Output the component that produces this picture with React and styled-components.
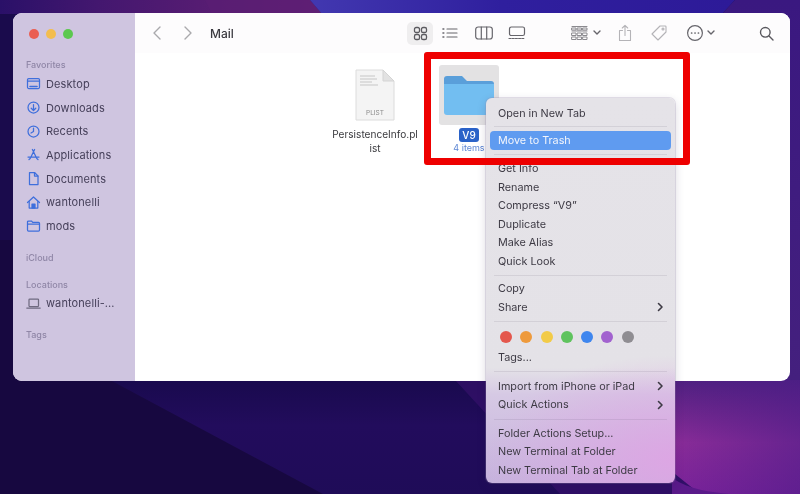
import React from 'react';
import styled, { createGlobalStyle } from 'styled-components';

const Global = createGlobalStyle`
  html, body { margin: 0; padding: 0; background: #170840; }
  body { font-family: Inter, "Liberation Sans", sans-serif; }
`;

const Desktop = styled.div`
  position: relative;
  width: 800px;
  height: 494px;
  overflow: hidden;
  filter: blur(0.4px);
`;

const WallpaperArt = styled.svg`
  position: absolute;
  inset: 0;
`;

const Wallpaper = () => (
  <WallpaperArt width="800" height="494" viewBox="0 0 800 494">
    <defs>
      <linearGradient id="topLeft" x1="0" y1="0" x2="1" y2="0">
        <stop offset="0" stopColor="#2a1068" />
        <stop offset="0.3" stopColor="#43176f" />
        <stop offset="1" stopColor="#6b2276" />
      </linearGradient>
      <linearGradient id="topBlue" x1="0" y1="0" x2="1" y2="0">
        <stop offset="0" stopColor="#4238b0" />
        <stop offset="0.45" stopColor="#2f1f9e" />
        <stop offset="1" stopColor="#2d1a98" />
      </linearGradient>
      <linearGradient id="low" x1="0" y1="0" x2="0" y2="1">
        <stop offset="0" stopColor="#190a4e" />
        <stop offset="0.4" stopColor="#220c5c" />
        <stop offset="1" stopColor="#1f0c58" />
      </linearGradient>
      <linearGradient id="magenta" x1="0" y1="0" x2="0" y2="1">
        <stop offset="0" stopColor="#4f2080" />
        <stop offset="0.55" stopColor="#8a2c98" />
        <stop offset="1" stopColor="#7a229a" />
      </linearGradient>
      <linearGradient id="fadeRight" x1="0" y1="0" x2="1" y2="0">
        <stop offset="0" stopColor="#4a1c88" stopOpacity="0" />
        <stop offset="1" stopColor="#4a1c88" stopOpacity="0.55" />
      </linearGradient>
      <linearGradient id="rightEdge" x1="0" y1="0" x2="0" y2="1">
        <stop offset="0" stopColor="#3a1880" />
        <stop offset="1" stopColor="#44207e" />
      </linearGradient>
    </defs>
    <rect width="800" height="494" fill="#170840" />
    <rect y="0" width="800" height="240" fill="#1a0b4c" />
    <path d="M0 0H310L322 14H0Z" fill="url(#topLeft)" />
    <path d="M205 0H310L322 14H212Z" fill="#5a1e74" opacity="0.7" />
    <path d="M310 0H735L722 14H322Z" fill="url(#topBlue)" />
    <path d="M735 0H800V380H770L722 14Z" fill="url(#rightEdge)" />
    <path d="M110 380H800V494H323Z" fill="url(#low)" />
    <path d="M455 380H800V494H560Z" fill="#3a1270" opacity="0.6" />
    <path d="M670 380H800V494H700L670 470Z" fill="url(#magenta)" />
    <path d="M670 380H800V494H670Z" fill="url(#fadeRight)" />
    <path d="M672 478C690 490 710 492 730 494H672Z" fill="#5a1a8a" />
  </WallpaperArt>
);

const Window = styled.div`
  position: absolute;
  left: 13px;
  top: 13px;
  width: 777px;
  height: 368px;
  display: flex;
  border-radius: 9px;
  overflow: hidden;
  background: #fff;
`;

const Sidebar = styled.aside`
  width: 122px;
  flex: none;
  background: #cfc5e0;
  display: flex;
  flex-direction: column;
  padding: 16px 0 0 13px;
  box-sizing: border-box;
`;

const Lights = styled.div`
  display: flex;
  gap: 7px;
  margin-left: 3px;
  margin-bottom: 20px;
`;

const Light = styled.span`
  width: 10px;
  height: 10px;
  border-radius: 50%;
  background: ${p => p.$color};
`;

const SectionLabel = styled.div`
  font-size: 9px;
  line-height: 12px;
  font-weight: 500;
  color: #8f86a6;
  margin-top: ${p => p.$gap || 0}px;
  margin-bottom: 1px;
`;

const SideItem = styled.div`
  display: flex;
  align-items: center;
  height: ${p => p.$h || 23.7}px;
  font-size: 11px;
  color: #46405a;
  white-space: nowrap;
  letter-spacing: 0.1px;
`;

const SideIcon = styled.svg`
  width: 15px;
  height: 15px;
  flex: none;
  margin-right: 5px;
  fill: none;
  stroke: ${p => p.$gray ? '#6f6a80' : '#3f6fdc'};
  stroke-width: 1.25;
  stroke-linecap: round;
  stroke-linejoin: round;
`;

const Main = styled.main`
  flex: 1;
  display: flex;
  flex-direction: column;
`;

const Toolbar = styled.header`
  height: 40px;
  flex: none;
  display: flex;
  align-items: center;
  background: #fdfcfd;
  position: relative;
`;

const NavGroup = styled.div`
  display: flex;
  gap: 15px;
  margin-left: 15px;
`;

const Title = styled.div`
  font-size: 12px;
  font-weight: 500;
  color: #3b3a40;
  margin-left: 15px;
  width: 197px;
`;

const ToolIcon = styled.svg`
  flex: none;
  display: block;
  width: ${p => p.$w || 18}px;
  height: ${p => p.$h || 18}px;
  margin-left: ${p => p.$ml || 0}px;
  fill: none;
  stroke: ${p => p.$color || '#66656b'};
  stroke-width: ${p => p.$sw || 1.2};
  stroke-linecap: round;
  stroke-linejoin: round;
`;

const ActiveTool = styled.div`
  width: 26px;
  height: 23px;
  border-radius: 5px;
  background: #efeeef;
  display: flex;
  align-items: center;
  justify-content: center;
  flex: none;
`;

const FileArea = styled.section`
  flex: 1;
  display: flex;
  align-items: flex-start;
  padding: 12px 0 0 193px;
`;

const FileItem = styled.div`
  width: 94px;
  display: flex;
  flex-direction: column;
  align-items: center;
`;

const Tile = styled.div`
  width: 60px;
  height: 60px;
  border-radius: 3px;
  background: ${p => p.$selected ? '#e3e2e3' : 'transparent'};
  display: flex;
  align-items: center;
  justify-content: center;
`;

const FileName = styled.div`
  margin-top: 2px;
  font-size: 10.1px;
  line-height: 14px;
  color: #3a3a3e;
  text-align: center;
`;

const Badge = styled.div`
  margin-top: 3px;
  padding: 0 3px;
  height: 14px;
  line-height: 14px;
  border-radius: 3px;
  background: #2a62c8;
  color: #fff;
  font-size: 10px;
  font-weight: 500;
`;

const SubLabel = styled.div`
  margin-top: 0;
  font-size: 9px;
  line-height: 11px;
  color: #5c86d4;
`;

const Menu = styled.div`
  position: absolute;
  left: 486px;
  top: 98px;
  width: 189px;
  height: 385px;
  box-sizing: border-box;
  padding: 5.75px 4px 0;
  border-radius: 6px;
  background:
    radial-gradient(ellipse 190px 105px at 100% 94%, rgba(222,165,228,.95), rgba(222,165,228,0)),
    linear-gradient(180deg, #e5e3e8 0, #e4e2e7 70%, #d6c9e4 77%, #c6b2dd 100%);
  box-shadow: 0 0 0 1px rgba(150,140,170,.25), 0 3px 10px rgba(40,20,70,.18);
`;

const Row = styled.div`
  height: 18.5px;
  display: flex;
  align-items: center;
  justify-content: space-between;
  padding: 0 8px;
  border-radius: 4px;
  font-size: 10.8px;
  color: ${p => p.$active ? '#f2f5fc' : '#3d3a44'};
  background: ${p => p.$active ? '#5f9bf0' : 'transparent'};
  white-space: nowrap;
`;

const Sep = styled.div`
  height: ${p => p.$h || 9}px;
  display: flex;
  align-items: center;
  padding: 0 4px;
  &::before {
    content: '';
    flex: 1;
    height: 1px;
    background: rgba(70,60,90,.11);
  }
`;

const Dots = styled.div`
  height: 22.5px;
  display: flex;
  align-items: center;
  gap: 8.3px;
  padding: 0 10px;
`;

const Dot = styled.span`
  width: 12px;
  height: 12px;
  border-radius: 50%;
  background: ${p => p.$color};
`;

const Chevron = styled.svg`
  width: 7px;
  height: 10px;
  fill: none;
  stroke: #3d3a44;
  stroke-width: 1.6;
  stroke-linecap: round;
  stroke-linejoin: round;
  margin-right: -1px;
`;

const Annotation = styled.div`
  position: absolute;
  left: 424px;
  top: 52px;
  width: 266px;
  height: 113px;
  box-sizing: border-box;
  border: 7.5px solid #ee0000;
  border-radius: 3px;
`;

const Icons = {
  desktop: <><rect x="1.5" y="2.5" width="12" height="10" rx="1.2" /><path d="M1.5 5h12" /><path d="M4 10.5h7" strokeWidth="1.6" /></>,
  downloads: <><circle cx="7.5" cy="7.5" r="5.5" /><path d="M7.5 4.5v6M5.2 8.2l2.3 2.3 2.3-2.3" /></>,
  recents: <><circle cx="7.5" cy="7.5" r="5.5" /><path d="M7.5 4v3.5L5 9" /></>,
  apps: <><path d="M8.6 2.5 4.2 11.5M6.4 2.5l4.4 9M2 10h11M3 12.5l1.2-1M12 12.5l-1.2-1" /></>,
  docs: <><path d="M3.5 1.5h5l3.5 3.5v8.5h-8.5z" /><path d="M8.5 1.5V5H12" /></>,
  home: <><path d="M1.5 7.5 7.5 2l6 5.5" /><path d="M3.2 6.5v6.5h8.6V6.5" /><rect x="6" y="9" width="3" height="4" fill="#3f6fdc" /></>,
  folder: <><path d="M1.5 4a1 1 0 0 1 1-1h3l1.2 1.3h5.8a1 1 0 0 1 1 1V12a1 1 0 0 1-1 1h-10a1 1 0 0 1-1-1z" /><path d="M1.5 6h12" /></>,
  laptop: <><rect x="3" y="3" width="9.5" height="7.5" rx=".8" /><path d="M.8 12h13.4" /></>
};

const favs = [
  ['desktop', 'Desktop'], ['downloads', 'Downloads'], ['recents', 'Recents'],
  ['apps', 'Applications'], ['docs', 'Documents'], ['home', 'wantonelli'], ['folder', 'mods']
];

const More = () => (
  <Chevron viewBox="0 0 7 10"><path d="M1.5 1.5 5 5 1.5 8.5" /></Chevron>
);

const colors = ['#e4574d', '#ee9a3c', '#f2cb48', '#5fc35e', '#3f86ee', '#a262cf', '#8f8d92'];

export default function App() {
  return (
    <Desktop>
      <Global />
      <Wallpaper />
      <Window>
        <Sidebar>
          <Lights>
            <Light $color="#ea5e52" />
            <Light $color="#f3bd4f" />
            <Light $color="#5cc84f" />
          </Lights>
          <SectionLabel>Favorites</SectionLabel>
          {favs.map(([k, t]) => (
            <SideItem key={t}>
              <SideIcon viewBox="0 0 15 15">{Icons[k]}</SideIcon>{t}
            </SideItem>
          ))}
          <SectionLabel $gap={14}>iCloud</SectionLabel>
          <SectionLabel $gap={14}>Locations</SectionLabel>
          <SideItem $h={23}>
            <SideIcon $gray viewBox="0 0 15 15">{Icons.laptop}</SideIcon>wantonelli-...
          </SideItem>
          <SectionLabel $gap={14}>Tags</SectionLabel>
        </Sidebar>
        <Main>
          <Toolbar>
            <NavGroup>
              <ToolIcon $w={15} $h={16} $color="#a9a9ac" $sw={1.4} viewBox="0 0 15 16"><path d="M10 2 4 8l6 6" /></ToolIcon>
              <ToolIcon $w={15} $h={16} $color="#a9a9ac" $sw={1.4} viewBox="0 0 15 16"><path d="m5 2 6 6-6 6" /></ToolIcon>
            </NavGroup>
            <Title>Mail</Title>
            <ActiveTool>
              <ToolIcon $w={15} $h={15} $color="#5c5b60" $sw={1.3} viewBox="0 0 15 15">
                <rect x="1.5" y="1.5" width="5" height="5" rx="1.6" /><rect x="8.5" y="1.5" width="5" height="5" rx="1.6" />
                <rect x="1.5" y="8.5" width="5" height="5" rx="1.6" /><rect x="8.5" y="8.5" width="5" height="5" rx="1.6" />
              </ToolIcon>
            </ActiveTool>
            <ToolIcon $w={16} $h={14} $ml={9} viewBox="0 0 16 14">
              <path d="M5 3h10M5 7h10M5 11h10" /><path d="M1 3h.8M1 7h.8M1 11h.8" strokeWidth="1.6" />
            </ToolIcon>
            <ToolIcon $w={18} $h={14} $ml={17} viewBox="0 0 18 14">
              <rect x=".7" y="1" width="16.6" height="12" rx="2.5" /><path d="M6.3 1v12M11.7 1v12" />
            </ToolIcon>
            <ToolIcon $w={18} $h={14} $ml={15} viewBox="0 0 18 14">
              <rect x="1.5" y="1" width="15" height="8.5" rx="1.8" /><path d="M1 12.5h16" strokeDasharray="2 1.2" />
            </ToolIcon>
            <ToolIcon $w={17} $h={16} $ml={45} $color="#8b8a8f" $sw={1} viewBox="0 0 17 16">
              <path d="M1 1.5h15M1 6h15" /><rect x="1" y="3" width="4" height="2" /><rect x="6.5" y="3" width="4" height="2" /><rect x="12" y="3" width="4" height="2" />
              <rect x="1" y="8" width="4" height="2.5" /><rect x="6.5" y="8" width="4" height="2.5" /><rect x="12" y="8" width="4" height="2.5" />
              <rect x="1" y="12" width="4" height="2.5" /><rect x="6.5" y="12" width="4" height="2.5" /><rect x="12" y="12" width="4" height="2.5" />
            </ToolIcon>
            <ToolIcon $w={8} $h={6} $ml={5} $sw={1.4} viewBox="0 0 8 6"><path d="m1 1 3 3 3-3" /></ToolIcon>
            <ToolIcon $w={14} $h={18} $ml={17} $color="#b4b3b7" $sw={1.1} viewBox="0 0 14 18">
              <path d="M4.5 6.5H1.5v10h11v-10h-3M7 11.5V1.5M4.3 4 7 1.3 9.7 4" />
            </ToolIcon>
            <ToolIcon $w={18} $h={18} $ml={18} $color="#b4b3b7" $sw={1.1} viewBox="0 0 18 18">
              <path d="M10 2h5.2a.8.8 0 0 1 .8.8V8l-8 8-6-6z" /><circle cx="13" cy="5" r="1" />
            </ToolIcon>
            <ToolIcon $w={18} $h={18} $ml={18} $color="#66656b" viewBox="0 0 18 18">
              <circle cx="9" cy="9" r="7.4" /><path d="M5.6 9h.1M9 9h.1M12.4 9h.1" strokeWidth="1.7" />
            </ToolIcon>
            <ToolIcon $w={8} $h={6} $ml={3} $sw={1.4} viewBox="0 0 8 6"><path d="m1 1 3 3 3-3" /></ToolIcon>
            <ToolIcon $w={15} $h={15} $ml={44} $color="#59585e" $sw={1.4} viewBox="0 0 15 15">
              <circle cx="6.3" cy="6.3" r="4.8" /><path d="m10 10 4 4" />
            </ToolIcon>
          </Toolbar>
          <FileArea>
            <FileItem>
              <Tile>
                <svg width="40" height="52" viewBox="0 0 40 52">
                  <path d="M1 1h27l11 11v39H1z" fill="#f4f4f4" stroke="#dcdcdc" />
                  <path d="M28 1v11h11z" fill="#e2e2e2" stroke="#d4d4d4" />
                  <path d="M5 7h15M5 10h17M5 13h12M5 16h18" stroke="#c6c6c6" strokeWidth="1" />
                  <text x="20" y="46" textAnchor="middle" fontSize="6.5" fill="#8b8b8b" fontFamily="Inter, sans-serif">PLIST</text>
                </svg>
              </Tile>
              <FileName>PersistenceInfo.pl<br />ist</FileName>
            </FileItem>
            <FileItem>
              <Tile $selected>
                <svg width="52" height="44" viewBox="0 0 52 44">
                  <path d="M1 6a3 3 0 0 1 3-3h15l5 5h24a3 3 0 0 1 3 3v6H1z" fill="#5a9fda" />
                  <path d="M1 11h50v28a3 3 0 0 1-3 3H4a3 3 0 0 1-3-3z" fill="#72bef1" />
                </svg>
              </Tile>
              <Badge>V9</Badge>
              <SubLabel>4 items</SubLabel>
            </FileItem>
          </FileArea>
        </Main>
      </Window>
      <Menu>
        <Row>Open in New Tab</Row>
        <Sep />
        <Row $active>Move to Trash</Row>
        <Sep $h={9.8} />
        <Row>Get Info</Row>
        <Row>Rename</Row>
        <Row>Compress “V9”</Row>
        <Row>Duplicate</Row>
        <Row>Make Alias</Row>
        <Row>Quick Look</Row>
        <Sep />
        <Row>Copy</Row>
        <Row>Share<More /></Row>
        <Sep />
        <Dots>{colors.map(c => <Dot key={c} $color={c} />)}</Dots>
        <Row>Tags...</Row>
        <Sep $h={10.5} />
        <Row>Import from iPhone or iPad<More /></Row>
        <Row>Quick Actions<More /></Row>
        <Sep $h={10} />
        <Row>Folder Actions Setup...</Row>
        <Row>New Terminal at Folder</Row>
        <Row>New Terminal Tab at Folder</Row>
      </Menu>
      <Annotation />
    </Desktop>
  );
}
